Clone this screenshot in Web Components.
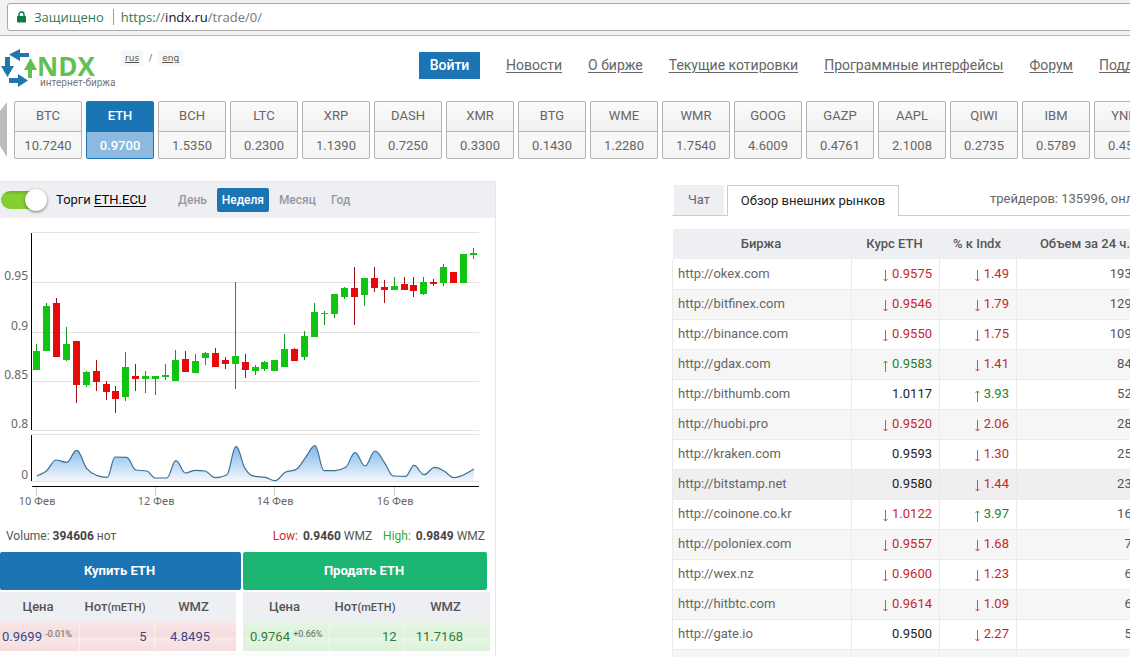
<!DOCTYPE html>
<html lang="ru">
<head>
<meta charset="utf-8">
<title>INDX интернет-биржа</title>
<style>
html { overflow-x: hidden; scrollbar-width: none; }
body { margin: 0; overflow-x: clip; background: #fff; color: #555; font: 13px/20px Roboto, "Liberation Sans", sans-serif; }
</style>
</head>
<body>
<indx-app></indx-app>
<script>
const define = (name, html, setup) => {
  const template = document.createElement('template');
  template.innerHTML = html;
  customElements.define(name, class extends HTMLElement {
    connectedCallback() {
      if (this.shadowRoot) return;
      const root = this.attachShadow({ mode: 'open' });
      root.append(template.content.cloneNode(true));
      if (setup) setup(root, this);
    }
  });
};

/* Browser address bar */
define('address-bar', `
<style>
:host { display: block; padding: 3px 0 4px 7px; background: #f2f2f2; border-bottom: 1px solid #b9b9b9; }
.box { display: flex; align-items: center; height: 26px; padding-left: 9px; background: #fff; border: 1px solid #a9a9a9; border-radius: 3px; color: #777; font: 13px/26px "Open Sans", "Noto Sans", sans-serif; }
svg { width: 9px; height: 12px; margin-right: 8px; }
.safe { color: #2b7a55; padding-right: 9px; }
.sep { width: 1px; height: 16px; background: #86a796; margin-right: 7px; }
.scheme { color: #2b7a55; }
.host { color: #111; }
</style>
<div class="box">
  <svg viewBox="0 0 9 12"><path d="M2 6V3.500a2.500 2.500 0 0 1 5 0V6" fill="none" stroke="#0b7a43" stroke-width="1.400"/><rect y="5" width="9" height="6.500" rx=".8" fill="#0b7a43"/></svg>
  <span class="safe">Защищено</span><span class="sep"></span>
  <span><span class="scheme">https:</span>//<span class="host">indx.ru</span>/trade/0/</span>
</div>`);

/* Logo */
define('indx-logo', `
<style>
:host { display: block; }
a { display: flex; text-decoration: none; }
svg { width: 37px; height: 40px; flex: none; }
.words { display: flex; flex-direction: column; padding-top: 6px; }
b { font: 700 26px/24px "Open Sans", "Noto Sans", sans-serif; color: #62bf56; }
small { font: 10px/10px Roboto, sans-serif; color: #777; padding-left: 3px; }
</style>
<a href="#">
<svg viewBox="0 48 37 40"><g fill="#2176ae"><path d="M9 54.500L20 49v4h9v4h-9v4z"/><path d="M5 57h5v9h4L7.500 77 1 66h4z"/><path d="M28 80.500L18 87v-4H9v-5h9v-4z"/></g><path d="M30.500 58L37 70h-5v8h-4v-8h-4z" fill="#62bf56"/></svg>
<span class="words"><b>NDX</b><small>интернет-биржа</small></span>
</a>`);

/* Header: logo, language switch and main menu */
define('site-header', `
<style>
:host { display: flex; align-items: flex-start; padding-top: 12px; height: 53px; }
indx-logo { width: 121px; }
.lang { display: flex; gap: 6px; width: 298px; padding-top: 2px; font: 9px/16px "DejaVu Sans", sans-serif; color: #666; }
.lang a { color: #555; background: #f7f7f7; padding: 0 4px; }
nav { display: flex; gap: 26px; padding-top: 4px; font-size: 14px; line-height: 27px; white-space: nowrap; }
nav a { color: #666; text-underline-offset: 2px; }
button { width: 61px; height: 27px; padding: 0; border: 0; background: #1b75b5; color: #fff; font: 500 14px/27px Roboto, sans-serif; }
</style>
<indx-logo></indx-logo>
<div class="lang"><a href="#">rus</a><span>/</span><a href="#">eng</a></div>
<nav><button>Войти</button><a href="#">Новости</a><a href="#">О бирже</a><a href="#">Текущие котировки</a><a href="#">Программные интерфейсы</a><a href="#">Форум</a><a href="#">Поддержка</a></nav>`);

/* One instrument of the ticker */
define('ticker-card', `
<style>
:host { display: block; flex: none; width: 68px; }
a { display: block; height: 56px; border: 1px solid #b3b3b3; border-radius: 2px; background: linear-gradient(#fafafa, #f2f2f2 50%, #f8f8f8 52%, #f5f5f5); color: #666; text-align: center; text-decoration: none; line-height: 27px; }
span { display: block; }
.name { height: 29px; border-bottom: 1px solid #b3b3b3; }
:host([active]) a { background: #8db9df; border-color: #1b75b5; color: #fff; font-weight: 500; }
:host([active]) .name { background: #1b75b5; border-color: #1b75b5; }
</style>
<a href="#"><span class="name"><slot name="name"></slot></span><span><slot></slot></span></a>`);

define('ticker-strip', `
<style>
:host { display: flex; gap: 4px; }
button { width: 10px; height: 58px; padding: 0; border: 0; background: none; }
svg { display: block; width: 10px; height: 58px; }
</style>
<button aria-label="Назад"><svg viewBox="0 0 10 58"><path d="M7 1V56L0 45V10z" fill="#bcbcbc"/></svg></button>`,
(root) => {
  const items = 'BTC 10.7240,ETH 0.9700,BCH 1.5350,LTC 0.2300,XRP 1.1390,DASH 0.7250,XMR 0.3300,BTG 0.1430,WME 1.2280,WMR 1.7540,GOOG 4.6009,GAZP 0.4761,AAPL 2.1008,QIWI 0.2735,IBM 0.5789,YNDX 0.4500';
  for (const item of items.split(',')) {
    const [name, rate] = item.split(' ');
    const card = document.createElement('ticker-card');
    if (name === 'ETH') card.setAttribute('active', '');
    card.innerHTML = `<span slot="name">${name}</span>${rate}`;
    root.append(card);
  }
});

/* Title row of the trading panel */
define('trade-toolbar', `
<style>
:host { display: flex; align-items: center; height: 36px; background: #eeeff3; border-top: 1px solid #e6e7ea; }
label { display: flex; align-items: center; color: #111; width: 171px; }
input { appearance: none; margin: 0 9px 0 1px; width: 46px; height: 18px; border-radius: 9px; background: linear-gradient(#6fae28, #85cf33 4px, #85cf33) no-repeat 0 0 / 40px 18px; display: flex; align-items: center; justify-content: flex-end; }
input::before { content: ""; width: 22px; height: 22px; flex: none; border-radius: 50%; background: #fff; box-shadow: 0 1px 3px #0008; }
label a { color: #000; text-underline-offset: 2px; }
.range { display: flex; gap: 1px; }
button { border: 0; padding: 0 7px; height: 24px; background: none; color: #9698a2; font: 500 12px/24px Roboto, sans-serif; }
button[aria-pressed=true] { width: 52px; margin: 0 2px; padding: 0; background: #1b75b5; color: #fff; border-radius: 2px; }
</style>
<label><input type="checkbox" checked><span>Торги <a href="#">ETH.ECU</a></span></label>
<div class="range"><button>День</button><button aria-pressed="true">Неделя</button><button>Месяц</button><button>Год</button></div>`);

/* Price candles over a volume area */
define('price-chart', `
<style>
:host { display: block; }
svg { display: block; width: 495px; height: 300px; }
text { font: 12px "Noto Sans", "Open Sans", sans-serif; fill: #666; }
.dates text { font-size: 11px; }
</style>
<svg viewBox="0 218 495 300" role="img" aria-label="ETH">
<defs><linearGradient id="fade" gradientUnits="userSpaceOnUse" x1="0" y1="445" x2="0" y2="481"><stop stop-color="#7cb5ec"/><stop offset="1" stop-color="#f4f7fc"/></linearGradient></defs>
<path d="M32 232.500H479M32 282.500H479M32 332.500H479M32 381.500H479M32 430.500H479M32 434.500H479M32 481.500H479" stroke="#e2e2e2"/>
<path d="M36.500 487v9M155.500 487v9M274.500 487v9M394.500 487v9" stroke="#ccc"/>
<g id="plot"></g>
<path d="M31.500 233V430M31.500 435V481M32 486.500H479" stroke="#000"/>
<g text-anchor="end"><text x="28" y="280">0.95</text><text x="28" y="330">0.9</text><text x="28" y="379">0.85</text><text x="28" y="428">0.8</text><text x="28" y="479">0</text></g>
<g class="dates" text-anchor="middle"><text x="37" y="505">10 Фев</text><text x="156" y="505">12 Фев</text><text x="275" y="505">14 Фев</text><text x="395" y="505">16 Фев</text></g>
</svg>`, (root) => {
  /* x, body top, body bottom, wick top, wick bottom (thirds of a unit), direction */
  const candles = '110 378 434 357 434 g,140 243 377 234 379 g,170 234 396 219 396 r,200 357 405 306 408 g,229 348 480 348 534 r,260 441 480 438 486 g,289 438 471 405 498 r,319 477 501 468 525 r,346 498 522 483 564 r,376 426 516 381 528 g,406 453 462 417 498 r,436 453 462 438 504 g,466 453 462 453 510 g,496 450 456 417 465 g,526 405 467 375 468 g,556 402 440 378 440 r,586 408 444 387 444 g,616 384 399 380 420 g,646 384 426 369 426 r,676 405 417 396 432 r,706 393 417 171 492 g,736 411 435 387 459 r,766 426 438 420 450 g,794 411 432 408 438 g,823 405 438 405 438 g,854 372 426 327 426 g,883 372 408 369 408 r,913 333 396 318 405 g,943 261 336 234 336 g,973 264 267 258 300 g,1003 207 267 207 279 g,1033 189 216 186 222 g,1063 189 216 126 300 r,1093 159 210 159 243 g,1123 159 189 126 201 r,1153 186 195 165 234 r,1183 183 195 156 195 g,1213 177 195 156 195 r,1240 180 198 156 216 r,1270 171 207 156 210 g,1300 171 177 162 183 r,1330 126 174 117 183 g,1360 141 174 141 174 r,1390 87 174 87 174 g,1420 84 90 69 102 g';
  let out = '';
  for (const row of candles.split(',')) {
    const [cx, ...rest] = row.split(' ');
    const up = rest.pop() === 'g';
    const x = Math.floor(cx / 3);
    const [t, b, wt, wb] = rest.map((v) => 225 + Math.round(v / 3));
    out += `<rect x="${x}" y="${wt}" width="1" height="${wb - wt}" fill="${up ? '#129a1c' : '#a31217'}"/>`
      + `<rect x="${x - 3}" y="${t}" width="7" height="${b - t}" fill="${up ? '#12c412' : '#e60a0a'}"/>`;
  }
  const points = '110,153 140,137 168,105 200,112 230,76 260,130 290,151 322,157 345,96 380,97 408,135 440,138 466,159 500,159 528,107 556,144 586,136 615,138 645,158 680,150 708,64 735,130 765,154 795,157 825,167 857,141 887,134 917,97 945,62 972,137 1005,137 1037,127 1065,83 1095,123 1125,78 1155,115 1180,153 1217,154 1242,121 1272,149 1304,127 1332,138 1362,158 1390,150 1422,132'
    .split(' ').map((p) => p.split(',').map(Number)).map(([x, y]) => [x / 3, 425 + y / 3]);
  const slope = (i) => (points[i + 1][1] - points[i][1]) / (points[i + 1][0] - points[i][0]);
  const tangent = points.map((p, i) => {
    if (i === 0) return slope(0);
    if (i === points.length - 1) return slope(i - 1);
    const a = slope(i - 1), c = slope(i);
    return a * c <= 0 ? 0 : Math.sign(a) * Math.min(Math.abs(a) * 2, Math.abs(c) * 2, Math.abs(a + c) / 2);
  });
  let line = `M${points[0]}`;
  for (let i = 1; i < points.length; i++) {
    const [x0, y0] = points[i - 1], [x1, y1] = points[i], h = (x1 - x0) * 0.4;
    line += `C${x0 + h},${y0 + h * tangent[i - 1]} ${x1 - h},${y1 - h * tangent[i]} ${x1},${y1}`;
  }
  out += `<path d="${line}V481H36.700z" fill="url(#fade)"/><path d="${line}" fill="none" stroke="#3d7192" stroke-width="1.200"/>`;
  root.getElementById('plot').innerHTML = out;
});

/* Order book for one side */
define('order-book', `
<style>
:host { display: block; --button: 241px; --table: 236px; --main: #1b75b5; --ink: #344a86; --a: #f9e6e7; --b: #f5dcde; --start: 2px; --end: 26px; --c1: 79px; --c3: 82px; }
:host([side=sell]) { --button: 244px; --table: 247px; --main: #1db574; --ink: #2e7d3c; --a: #e6f6e4; --b: #dcf1da; --start: 7px; --end: 27px; --c1: 86px; --c3: 86px; }
button { display: block; width: var(--button); height: 38px; border: 0; padding: 0 2px 0 0; border-radius: 2px; background: var(--main); color: #fff; font: 700 13px/38px Roboto, sans-serif; }
table { margin-top: 2px; table-layout: fixed; width: var(--table); border-collapse: collapse; }
th { height: 30px; padding: 0 3px 0 0; background: #eeeff2; color: #555; font-weight: 500; text-align: center; }
th small { font-size: 11px; }
td { height: 30px; padding: 0 7px 0 0; box-sizing: border-box; color: var(--ink); text-align: right; border-right: 1px solid #ffffff80; background: linear-gradient(var(--a), var(--b) 50%, var(--a) 54%, var(--b)); white-space: nowrap; }
td:first-child { text-align: left; padding: 0 0 0 var(--start); }
td:last-child { padding-right: var(--end); border-right: 0; }
sup { font-size: 9px; line-height: 9px; color: #666; vertical-align: 4px; }
tr.next td { background: #fcfcfc; border-top: 2px solid #fff; }
.c1 { width: var(--c1); } .c2 { width: 75px; } .c3 { width: var(--c3); }
</style>
<button><slot name="action"></slot></button>
<table><colgroup><col class="c1"><col class="c2"><col class="c3"></colgroup><thead><tr><th>Цена</th><th>Нот<small>(mETH)</small></th><th>WMZ</th></tr></thead>
<tbody><tr><td><slot name="price"></slot> <sup><slot name="diff"></slot></sup></td><td><slot name="amount"></slot></td><td><slot name="sum"></slot></td></tr><tr class="next"><td></td><td></td><td></td></tr></tbody></table>`);

define('trade-panel', `
<style>
:host { display: block; flex: none; width: 495px; border-right: 1px solid #e6e6e6; }
.stats { display: flex; justify-content: space-between; height: 34px; padding: 0 10px 0 6px; font-size: 12px; line-height: 36px; color: #555; }
.stats b { font-weight: 700; color: #444; }
.low { color: #d02a2a; margin-right: 2px; }
.high { color: #35a835; margin: 0 2px 0 8px; }
.books { display: flex; gap: 2px; }
order-book { width: 241px; }
order-book[side=sell] { width: 247px; }
</style>
<trade-toolbar></trade-toolbar>
<price-chart></price-chart>
<div class="stats"><span>Volume: <b>394606</b> нот</span><span><span class="low">Low:</span> <b>0.9460</b> WMZ <span class="high">High:</span> <b>0.9849</b> WMZ</span></div>
<div class="books">
<order-book><span slot="action">Купить ETH</span><span slot="price">0.9699</span><span slot="diff">-0.01%</span><span slot="amount">5</span><span slot="sum">4.8495</span></order-book>
<order-book side="sell"><span slot="action">Продать ETH</span><span slot="price">0.9764</span><span slot="diff">+0.66%</span><span slot="amount">12</span><span slot="sum">11.7168</span></order-book>
</div>`);

/* Rates on other exchanges */
define('market-table', `
<style>
:host { display: block; }
table { width: 100%; table-layout: fixed; border-collapse: collapse; }
th { height: 30px; padding: 0 2px 0 0; background: #eeeff2; color: #555; font-weight: 500; }
th:last-child { padding-right: 5px; }
td { height: 30px; box-sizing: border-box; padding: 0 7px 0 5px; border: 1px solid #ebebeb; border-top: 0; text-align: right; color: #555; white-space: nowrap; }
td:first-child { text-align: left; }
td a { color: #666; text-decoration: none; }
tr:nth-child(even) td { background: #f6f6f6; }
tr.hover td { background: #efefef; }
td.flat { color: #222; } td.down { color: #c9252b; } td.up { color: #2a7f2a; }
svg { width: 6px; height: 12px; margin-right: 4px; vertical-align: -4px; fill: none; stroke: currentColor; stroke-width: .8; }
</style>
<table><colgroup><col style="width:179px"><col style="width:88px"><col style="width:77px"><col></colgroup>
<thead><tr><th>Биржа</th><th>Курс ETH</th><th>% к Indx</th><th>Объем за 24 ч., USD</th></tr></thead><tbody></tbody></table>`,
(root) => {
  const arrow = {
    '-': ['down', '<svg viewBox="0 0 6 12"><path d="M3.500 0V11M1.500 9L3.500 11L5.500 9"/></svg>'],
    '+': ['up', '<svg viewBox="0 0 6 12"><path d="M3.500 12V1M1.500 3L3.500 1L5.500 3"/></svg>'],
    '=': ['flat', '']
  };
  const cell = (v) => `<td class="${arrow[v[0]][0]}">${arrow[v[0]][1]}${v.slice(1)}</td>`;
  const rows = ['okex.com -0.9575 -1.49 193', 'bitfinex.com -0.9546 -1.79 129', 'binance.com -0.9550 -1.75 109', 'gdax.com +0.9583 -1.41 84', 'bithumb.com =1.0117 +3.93 52', 'huobi.pro -0.9520 -2.06 28', 'kraken.com =0.9593 -1.30 25', 'bitstamp.net =0.9580 -1.44 23', 'coinone.co.kr -1.0122 +3.97 16', 'poloniex.com -0.9557 -1.68 7', 'wex.nz -0.9600 -1.23 6', 'hitbtc.com -0.9614 -1.09 6', 'gate.io =0.9500 -2.27 5'];
  root.querySelector('tbody').innerHTML = rows.map((row) => {
    const [host, rate, diff, volume] = row.split(' ');
    return `<tr${host === 'bitstamp.net' ? ' class="hover"' : ''}><td><a href="#">http://${host}</a></td>${cell(rate)}${cell(diff)}<td>${volume} 000 000</td></tr>`;
  }).join('') + '<tr><td></td><td></td><td></td><td></td></tr>';
});

define('market-panel', `
<style>
:host { display: block; flex: 1; padding-top: 4px; }
.tabs { display: flex; height: 31px; box-shadow: inset 0 -1px #ccc; margin-bottom: 13px; }
button { padding: 0; border: 0; height: 30px; width: 50px; margin: 0 3px 0 2px; background: #eeeff2; color: #666; font: 13px/30px Roboto, sans-serif; }
button[aria-selected=true] { height: 31px; width: 172px; margin: 0; background: #fff; color: #222; border: 1px solid #ccc; border-bottom: 0; line-height: 28px; }
.count { margin-left: auto; line-height: 28px; white-space: nowrap; color: #666; width: 200px; }
</style>
<div class="tabs" role="tablist"><button role="tab">Чат</button><button role="tab" aria-selected="true">Обзор внешних рынков</button><span class="count">трейдеров: 135996, онлайн: 100</span></div>
<market-table></market-table>`);

define('indx-app', `
<style>
:host { display: block; min-width: 1190px; }
main { display: flex; gap: 176px; padding-top: 22px; }
</style>
<address-bar></address-bar>
<site-header></site-header>
<ticker-strip></ticker-strip>
<main><trade-panel></trade-panel><market-panel></market-panel></main>`);
</script>
</body>
</html>
